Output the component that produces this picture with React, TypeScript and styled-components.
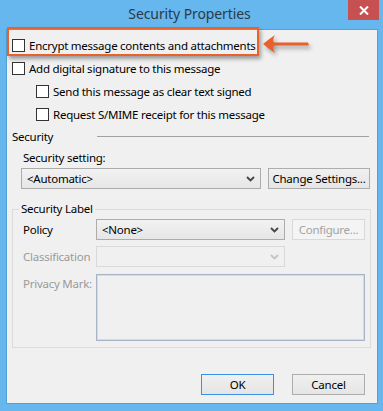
import React from 'react';
import styled, { createGlobalStyle } from 'styled-components';

const GlobalStyle = createGlobalStyle`
  html, body {
    margin: 0;
    padding: 0;
    background: #67b7ef;
  }
  * {
    box-sizing: border-box;
  }
`;

const UI_FONT = `'Noto Sans', 'Open Sans', sans-serif`;

const Window = styled.div`
  position: relative;
  width: 383px;
  height: 411px;
  background: #67b7ef;
  display: flex;
  flex-direction: column;
  font-family: ${UI_FONT};
  font-size: 11.5px;
  letter-spacing: -0.25px;
  color: #000;
`;

const TitleBar = styled.div`
  height: 29px;
  display: grid;
  grid-template-columns: 1fr auto 1fr;
  padding-right: 4px;
`;

const Title = styled.div`
  grid-column: 2;
  align-self: center;
  font-size: 14px;
  letter-spacing: -0.1px;
  color: #2c3a48;
  padding-bottom: 2px;
`;

const CloseButton = styled.div`
  grid-column: 3;
  justify-self: end;
  width: 31px;
  height: 20px;
  background: #c75050;
  display: flex;
  align-items: center;
  justify-content: center;
`;

const Client = styled.div`
  flex: 1;
  margin: 0 5px 7px 6px;
  background: #f0f0f0;
  border: 1px solid #56a0d8;
  padding: 4px 7px 0 5px;
  display: flex;
  flex-direction: column;
`;

const CheckRow = styled.label<{ $indent?: boolean }>`
  height: 23px;
  display: flex;
  align-items: center;
  gap: 4px;
  padding-left: ${(p) => (p.$indent ? '24px' : '0')};
  white-space: nowrap;
`;

const Box = styled.span`
  width: 13px;
  height: 13px;
  border: 1px solid #333;
  background: #fff;
  flex-shrink: 0;
`;

const SectionHeader = styled.div`
  height: 20px;
  display: grid;
  grid-template-columns: 85px 1fr;
  align-items: center;
  padding-right: 1px;
`;

const Rule = styled.div`
  height: 1px;
  background: #a0a0a0;
`;

const FieldLabel = styled.div<{ $disabled?: boolean }>`
  height: 20px;
  display: flex;
  align-items: center;
  padding-left: ${(p) => (p.$disabled === undefined ? '11px' : '0')};
  color: ${(p) => (p.$disabled ? '#9a9a9a' : '#000')};
  white-space: nowrap;
`;

const SettingRow = styled.div`
  display: flex;
  gap: 7px;
  padding-left: 9px;
  margin-top: 1px;
`;

const Combo = styled.div<{ $width: number; $disabled?: boolean }>`
  width: ${(p) => p.$width}px;
  height: 21px;
  border: 1px solid ${(p) => (p.$disabled ? '#d9d9d9' : '#acacac')};
  background: ${(p) =>
    p.$disabled ? '#f0f0f0' : 'linear-gradient(#f2f2f2, #e6e6e6)'};
  display: flex;
  align-items: center;
  justify-content: space-between;
  padding: 0 5px 0 5px;
  color: #000;
`;

const Button = styled.div<{ $width?: number; $variant?: 'default' | 'disabled' }>`
  width: ${(p) => p.$width ?? 73}px;
  height: 21px;
  border: 1px solid
    ${(p) =>
      p.$variant === 'default'
        ? '#3a8fe8'
        : p.$variant === 'disabled'
        ? '#d9d9d9'
        : '#adadad'};
  background: ${(p) =>
    p.$variant === 'disabled' ? '#f4f4f4' : 'linear-gradient(#f0f0f0, #e5e5e5)'};
  color: ${(p) => (p.$variant === 'disabled' ? '#a3a3a3' : '#000')};
  display: flex;
  align-items: center;
  justify-content: center;
  white-space: nowrap;
`;

const Group = styled.fieldset`
  margin: 12px -1px 0 0;
  border: 1px solid #dcdcdc;
  padding: 2px 6px 7px 10px;
  min-width: 0;
`;

const Legend = styled.legend`
  padding: 0 2px;
  margin-left: -4px;
  line-height: 16px;
  color: #000;
`;

const LabelGrid = styled.div`
  display: grid;
  grid-template-columns: 66px 189px 73px;
  grid-template-rows: 21px 21px 67px;
  column-gap: 7px;
  row-gap: 6px;
  align-items: center;
`;

const PrivacyBox = styled.div`
  grid-column: 2 / 4;
  height: 67px;
  margin-top: 1px;
  border: 1px solid #a6b4c6;
  box-shadow: inset 0 0 0 1px #d3dbe4;
  background: #f0f0f0;
`;

const PrivacyLabel = styled(FieldLabel)`
  align-self: start;
`;

const Footer = styled.div`
  margin-top: 26px;
  display: flex;
  justify-content: flex-end;
  gap: 18px;
  padding-right: 5px;
`;

const Highlight = styled.div`
  position: absolute;
  left: 7px;
  top: 27px;
  width: 252px;
  height: 29px;
  border: 2px solid #ea622b;
  box-shadow: 2px 3px 4px rgba(0, 0, 0, 0.35);
  pointer-events: none;
`;

const Arrow = styled.svg`
  position: absolute;
  left: 258px;
  top: 30px;
  filter: drop-shadow(2px 3px 2px rgba(0, 0, 0, 0.35));
`;

const Chevron = ({ color }: { color: string }) => (
  <svg width="9" height="6" viewBox="0 0 9 6">
    <polyline points="1,1 4.5,4.5 8,1" fill="none" stroke={color} strokeWidth="1.8" />
  </svg>
);

export default function App() {
  return (
    <>
      <GlobalStyle />
      <Window>
        <TitleBar>
          <Title>Security Properties</Title>
          <CloseButton>
            <svg width="10" height="9" viewBox="0 0 10 9">
              <path d="M1 0.5 L9 8.5 M9 0.5 L1 8.5" stroke="#fff" strokeWidth="2" />
            </svg>
          </CloseButton>
        </TitleBar>
        <Client>
          <CheckRow>
            <Box />
            Encrypt message contents and attachments
          </CheckRow>
          <CheckRow>
            <Box />
            Add digital signature to this message
          </CheckRow>
          <CheckRow $indent>
            <Box />
            Send this message as clear text signed
          </CheckRow>
          <CheckRow $indent>
            <Box />
            Request S/MIME receipt for this message
          </CheckRow>

          <SectionHeader>
            <span>Security</span>
            <Rule />
          </SectionHeader>
          <FieldLabel style={{ marginTop: 1 }}>Security setting:</FieldLabel>
          <SettingRow>
            <Combo $width={240}>
              &lt;Automatic&gt;
              <Chevron color="#444" />
            </Combo>
            <Button $width={102}>Change Settings...</Button>
          </SettingRow>

          <Group>
            <Legend>Security Label</Legend>
            <LabelGrid>
              <FieldLabel $disabled={false}>Policy</FieldLabel>
              <Combo $width={189}>
                &lt;None&gt;
                <Chevron color="#444" />
              </Combo>
              <Button $variant="disabled">Configure...</Button>

              <FieldLabel $disabled>Classification</FieldLabel>
              <Combo $width={189} $disabled>
                <span />
                <Chevron color="#c4c4c4" />
              </Combo>
              <span />

              <PrivacyLabel $disabled>Privacy Mark:</PrivacyLabel>
              <PrivacyBox />
            </LabelGrid>
          </Group>

          <Footer>
            <Button $variant="default">OK</Button>
            <Button>Cancel</Button>
          </Footer>
        </Client>

        <Highlight />
        <Arrow width="56" height="30" viewBox="0 0 56 30">
          <path
            d="M5 14 Q11 9 17 5 Q14 10 16 12.6 L50 12.4 L51 15.6 L16 15.4 Q14 18 17 23 Q11 19 5 14 Z"
            fill="#e8602a"
          />
        </Arrow>
      </Window>
    </>
  );
}
